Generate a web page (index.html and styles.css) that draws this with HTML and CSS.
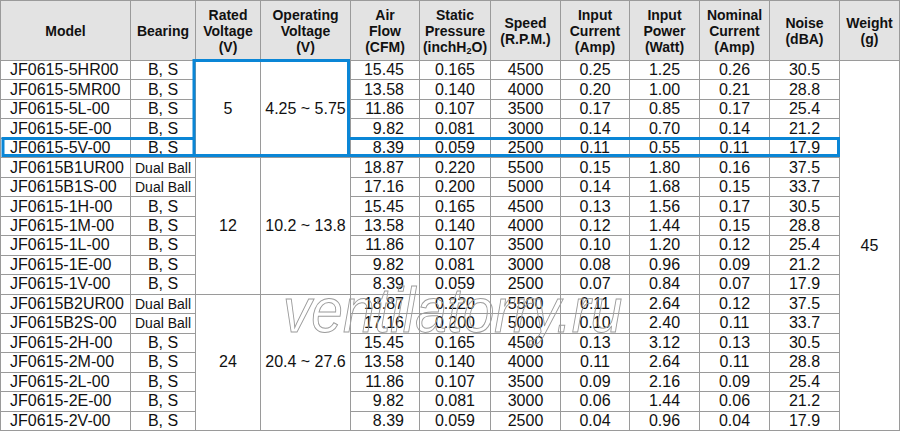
FILE: index.html
```html
<!DOCTYPE html>
<html lang="en">
<head>
<meta charset="utf-8">
<title>JF0615 specifications</title>
<link rel="stylesheet" href="styles.css">
</head>
<body>
<div class="sheet">
  <div class="spec">
    <div class="h"><span>Model</span></div>
    <div class="h"><span>Bearing</span></div>
    <div class="h"><span>Rated<br>Voltage<br>(V)</span></div>
    <div class="h"><span>Operating<br>Voltage<br>(V)</span></div>
    <div class="h"><span>Air<br>Flow<br>(CFM)</span></div>
    <div class="h"><span>Static<br>Pressure<br>(inchH<span class="sub">2</span>O)</span></div>
    <div class="h"><span>Speed<br>(R.P.M.)</span></div>
    <div class="h"><span>Input<br>Current<br>(Amp)</span></div>
    <div class="h"><span>Input<br>Power<br>(Watt)</span></div>
    <div class="h"><span>Nominal<br>Current<br>(Amp)</span></div>
    <div class="h"><span>Noise<br>(dBA)</span></div>
    <div class="h"><span>Weight<br>(g)</span></div>

    <div class="c m">JF0615-5HR00</div><div class="c">B, S</div>
    <div class="c span5">5</div><div class="c span5">4.25 ~ 5.75</div>
    <div class="c af">15.45</div><div class="c">0.165</div><div class="c">4500</div><div class="c">0.25</div><div class="c">1.25</div><div class="c">0.26</div><div class="c">30.5</div>
    <div class="c span19">45</div>
    <div class="c m">JF0615-5MR00</div><div class="c">B, S</div><div class="c af">13.58</div><div class="c">0.140</div><div class="c">4000</div><div class="c">0.20</div><div class="c">1.00</div><div class="c">0.21</div><div class="c">28.8</div>
    <div class="c m">JF0615-5L-00</div><div class="c">B, S</div><div class="c af">11.86</div><div class="c">0.107</div><div class="c">3500</div><div class="c">0.17</div><div class="c">0.85</div><div class="c">0.17</div><div class="c">25.4</div>
    <div class="c m">JF0615-5E-00</div><div class="c">B, S</div><div class="c af">9.82</div><div class="c">0.081</div><div class="c">3000</div><div class="c">0.14</div><div class="c">0.70</div><div class="c">0.14</div><div class="c">21.2</div>
    <div class="c m">JF0615-5V-00</div><div class="c">B, S</div><div class="c af">8.39</div><div class="c">0.059</div><div class="c">2500</div><div class="c">0.11</div><div class="c">0.55</div><div class="c">0.11</div><div class="c">17.9</div>

    <div class="c m">JF0615B1UR00</div><div class="c db">Dual Ball</div>
    <div class="c span7">12</div><div class="c span7">10.2 ~ 13.8</div>
    <div class="c af">18.87</div><div class="c">0.220</div><div class="c">5500</div><div class="c">0.15</div><div class="c">1.80</div><div class="c">0.16</div><div class="c">37.5</div>
    <div class="c m">JF0615B1S-00</div><div class="c db">Dual Ball</div><div class="c af">17.16</div><div class="c">0.200</div><div class="c">5000</div><div class="c">0.14</div><div class="c">1.68</div><div class="c">0.15</div><div class="c">33.7</div>
    <div class="c m">JF0615-1H-00</div><div class="c">B, S</div><div class="c af">15.45</div><div class="c">0.165</div><div class="c">4500</div><div class="c">0.13</div><div class="c">1.56</div><div class="c">0.17</div><div class="c">30.5</div>
    <div class="c m">JF0615-1M-00</div><div class="c">B, S</div><div class="c af">13.58</div><div class="c">0.140</div><div class="c">4000</div><div class="c">0.12</div><div class="c">1.44</div><div class="c">0.15</div><div class="c">28.8</div>
    <div class="c m">JF0615-1L-00</div><div class="c">B, S</div><div class="c af">11.86</div><div class="c">0.107</div><div class="c">3500</div><div class="c">0.10</div><div class="c">1.20</div><div class="c">0.12</div><div class="c">25.4</div>
    <div class="c m">JF0615-1E-00</div><div class="c">B, S</div><div class="c af">9.82</div><div class="c">0.081</div><div class="c">3000</div><div class="c">0.08</div><div class="c">0.96</div><div class="c">0.09</div><div class="c">21.2</div>
    <div class="c m">JF0615-1V-00</div><div class="c">B, S</div><div class="c af">8.39</div><div class="c">0.059</div><div class="c">2500</div><div class="c">0.07</div><div class="c">0.84</div><div class="c">0.07</div><div class="c">17.9</div>

    <div class="c m">JF0615B2UR00</div><div class="c db">Dual Ball</div>
    <div class="c span7">24</div><div class="c span7">20.4 ~ 27.6</div>
    <div class="c af">18.87</div><div class="c">0.220</div><div class="c">5500</div><div class="c">0.11</div><div class="c">2.64</div><div class="c">0.12</div><div class="c">37.5</div>
    <div class="c m">JF0615B2S-00</div><div class="c db">Dual Ball</div><div class="c af">17.16</div><div class="c">0.200</div><div class="c">5000</div><div class="c">0.10</div><div class="c">2.40</div><div class="c">0.11</div><div class="c">33.7</div>
    <div class="c m">JF0615-2H-00</div><div class="c">B, S</div><div class="c af">15.45</div><div class="c">0.165</div><div class="c">4500</div><div class="c">0.13</div><div class="c">3.12</div><div class="c">0.13</div><div class="c">30.5</div>
    <div class="c m">JF0615-2M-00</div><div class="c">B, S</div><div class="c af">13.58</div><div class="c">0.140</div><div class="c">4000</div><div class="c">0.11</div><div class="c">2.64</div><div class="c">0.11</div><div class="c">28.8</div>
    <div class="c m">JF0615-2L-00</div><div class="c">B, S</div><div class="c af">11.86</div><div class="c">0.107</div><div class="c">3500</div><div class="c">0.09</div><div class="c">2.16</div><div class="c">0.09</div><div class="c">25.4</div>
    <div class="c m">JF0615-2E-00</div><div class="c">B, S</div><div class="c af">9.82</div><div class="c">0.081</div><div class="c">3000</div><div class="c">0.06</div><div class="c">1.44</div><div class="c">0.06</div><div class="c">21.2</div>
    <div class="c m">JF0615-2V-00</div><div class="c">B, S</div><div class="c af">8.39</div><div class="c">0.059</div><div class="c">2500</div><div class="c">0.04</div><div class="c">0.96</div><div class="c">0.04</div><div class="c">17.9</div>
  </div>

  <svg class="highlight" width="900" height="431" viewBox="0 0 900 431" aria-hidden="true">
    <rect x="194" y="60.5" width="154.5" height="95" fill="none" stroke="#0a86d6" stroke-width="3"/>
    <path d="M194 138.5 H3 V155.5 H838.5 V138.5 H348.5" fill="none" stroke="#0a86d6" stroke-width="3"/>
  </svg>

  <div class="watermark">ventilatorry.ru</div>
</div>
</body>
</html>
```

FILE: styles.css
```css
html, body {
  margin: 0;
  padding: 0;
  background: #ffffff;
}

.sheet {
  position: relative;
  width: 900px;
  height: 431px;
  overflow: hidden;
  font-family: "Liberation Sans", Arial, sans-serif;
  color: #111111;
}

.spec {
  box-sizing: border-box;
  width: 900px;
  height: 431px;
  display: grid;
  grid-template-columns: 129px 64px 64px 89px 68px 70px 69px 68px 69px 69px 69px 59px;
  grid-template-rows: 59px repeat(19, 1fr);
  gap: 1px;
  border: 1px solid #9a9a9a;
  background: #9a9a9a;
}

.h {
  background: #e3e3e3;
  display: flex;
  align-items: center;
  justify-content: center;
  text-align: center;
  font-weight: bold;
  font-size: 14px;
  line-height: 16px;
  white-space: nowrap;
}

.sub {
  font-size: 9px;
  line-height: 0;
  vertical-align: -2px;
}

.c {
  background: #ffffff;
  display: flex;
  align-items: center;
  justify-content: center;
  font-size: 16px;
  line-height: 16px;
  white-space: nowrap;
}

.c.m {
  justify-content: flex-start;
  padding-left: 9px;
}

.c.af {
  justify-content: flex-end;
  padding-right: 15px;
}

.c.db {
  font-size: 14px;
}

.span5 { grid-row: span 5; }
.span7 { grid-row: span 7; }
.span19 { grid-row: span 19; }

.highlight {
  position: absolute;
  left: 0;
  top: 0;
  pointer-events: none;
}

.watermark {
  position: absolute;
  left: 283px;
  top: 279px;
  font-family: "Liberation Sans", Arial, sans-serif;
  font-style: italic;
  font-size: 63px;
  line-height: 63px;
  color: transparent;
  -webkit-text-stroke: 1px #9c9c9c;
  white-space: nowrap;
  transform: scaleX(0.9);
  transform-origin: 0 0;
  pointer-events: none;
}
```
